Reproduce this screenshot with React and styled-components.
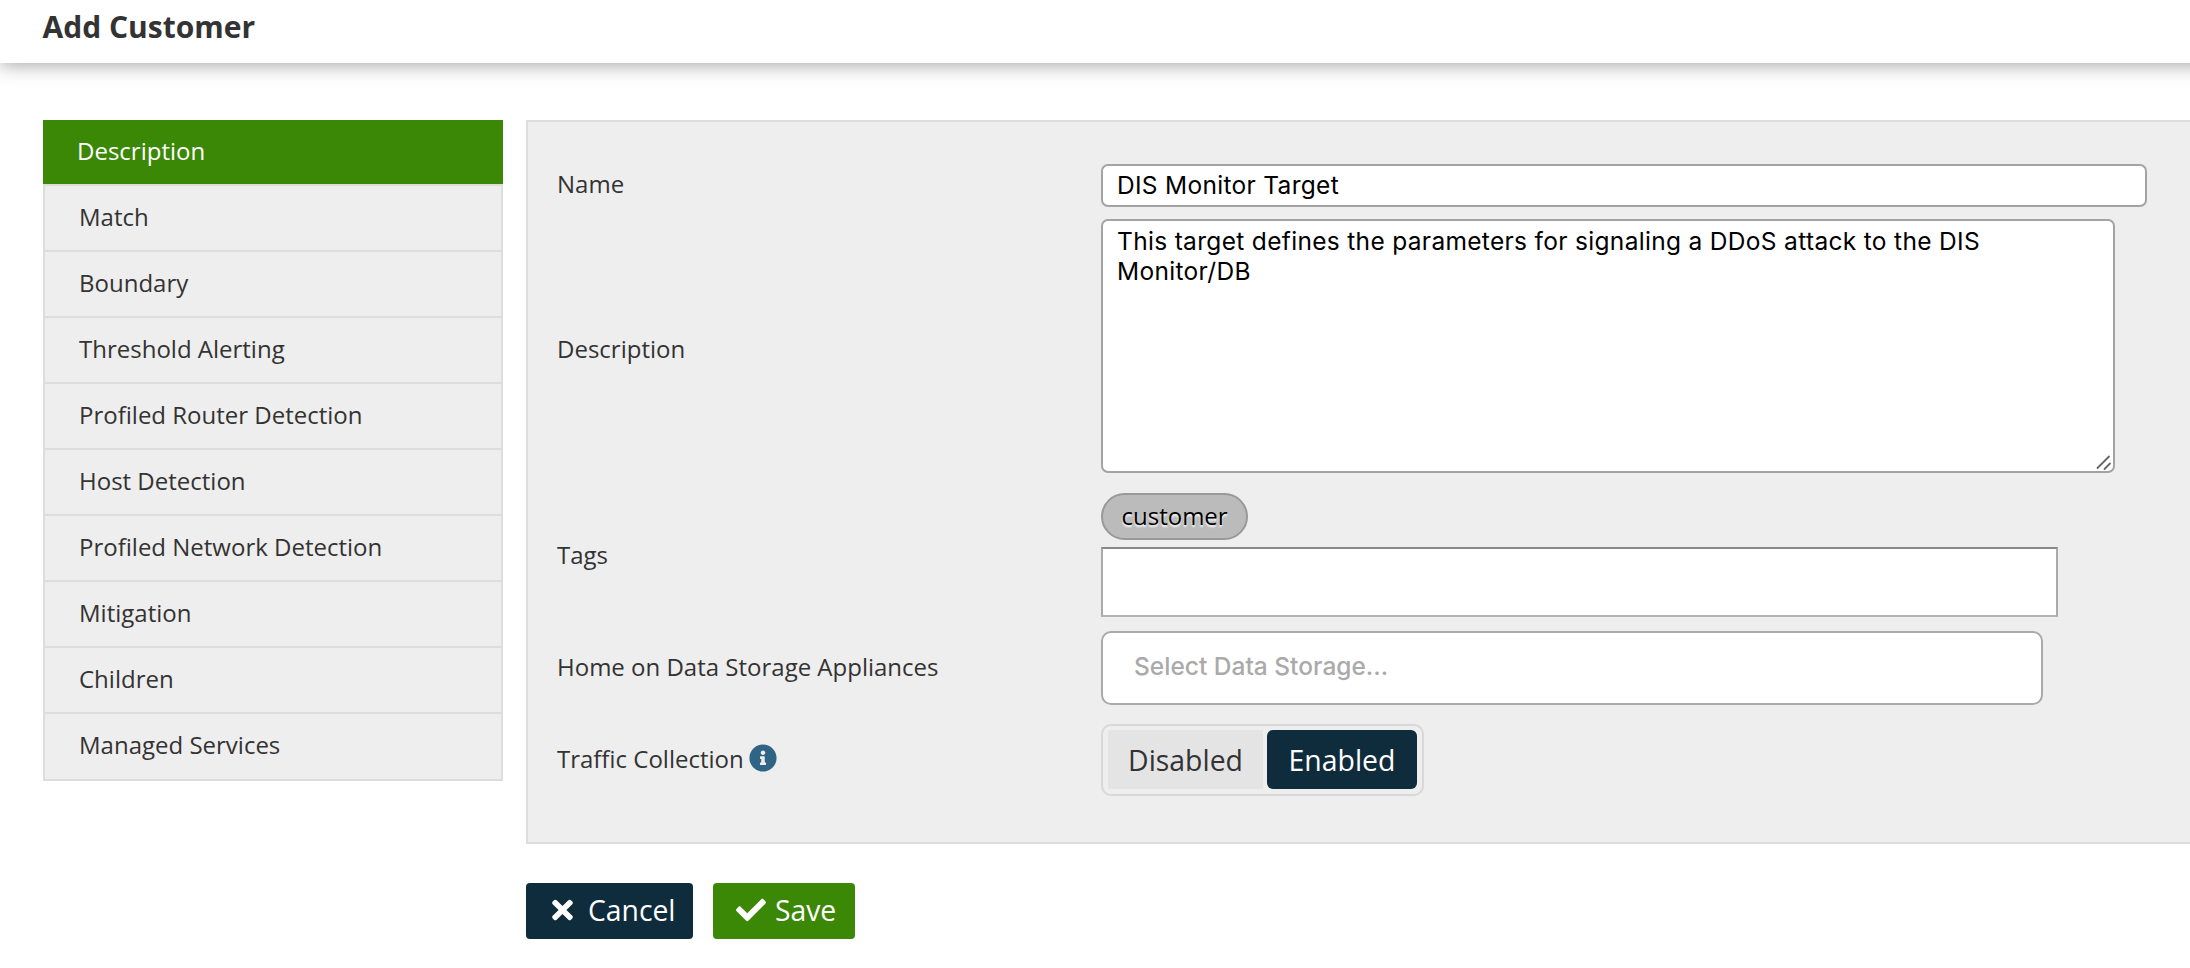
import React from "react";
import styled, { createGlobalStyle } from "styled-components";
import { FaCheck, FaInfoCircle, FaTimes } from "react-icons/fa";

const Global = createGlobalStyle`
  *, *::before, *::after { box-sizing: border-box; }
  body { margin: 0; background: #fff; color: #333; overflow: hidden; font: 24px/32px "Open Sans", sans-serif; }
`;

const Header = styled.header`
  height: 63px;
  margin-right: -24px;
  padding: 5px 42.5px 0;
  box-shadow: 0 2px 18px rgba(0, 0, 0, 0.36);
`;

const Title = styled.h1`
  margin: 0;
  font-size: 30px;
  line-height: 44px;
  font-weight: 700;
`;

const Layout = styled.main`
  display: flex;
  align-items: flex-start;
  gap: 23px;
  padding: 57px 0 0 43px;
`;

const Nav = styled.nav`
  flex: none;
  width: 460px;
`;

const NavItem = styled.a`
  display: flex;
  align-items: center;
  height: 66px;
  padding: 0 34px 2px;
  color: #333;
  background: #eee;
  border: 2px solid #ddd;
  border-bottom: 0;
  &:last-child { height: 69px; border-bottom: 2px solid #ddd; padding-bottom: 3px; }
  ${(p) => p.$active && `
    height: 64px;
    color: #fff;
    background: #3b8706;
    border-color: #3b8706;
    padding: 0 32px 4px;
  `}
`;

const Content = styled.section`
  flex: 1;
`;

const Panel = styled.div`
  display: flex;
  flex-direction: column;
  height: 724px;
  padding: 42px 0 0 29px;
  background: #eee;
  border: 2px solid #ddd;
  border-right: 0;
`;

const Row = styled.div`
  display: grid;
  grid-template-columns: 544px auto;
  justify-content: start;
  align-items: center;
  margin-bottom: ${(p) => p.$gap}px;
`;

const Label = styled.label`
  display: flex;
  align-items: center;
  gap: 5px;
  padding-top: ${(p) => p.$drop || 0}px;
  padding-bottom: ${(p) => p.$lift || 0}px;
`;

const InfoIcon = styled(FaInfoCircle)`
  width: 28px;
  height: 28px;
  margin-top: -3px;
  color: #2f6485;
`;

const TextInput = styled.input`
  width: 1046px;
  height: 43px;
  padding: 0 14px 2px;
  color: #000;
  background: #fff;
  border: 2px solid #a3a3a3;
  border-radius: 7px;
  outline: 0;
  font: 24.5px "Inter", sans-serif;
  letter-spacing: 0.3px;
`;

const AreaWrap = styled.div`
  position: relative;
  width: 1014px;
  height: 254px;
`;

const TextArea = styled.textarea`
  display: block;
  width: 100%;
  height: 100%;
  padding: 5px 14px;
  color: #000;
  background: #fff;
  border: 2px solid #a3a3a3;
  border-radius: 7px;
  outline: 0;
  resize: none;
  font: 24.5px/30px "Inter", sans-serif;
  letter-spacing: 0.32px;
`;

const Grip = styled.svg`
  position: absolute;
  right: 3px;
  bottom: 2px;
`;

const TagField = styled.div`
  display: flex;
  flex-direction: column;
  align-items: flex-start;
  gap: 7px;
`;

const Tag = styled.span`
  width: 147px;
  height: 47px;
  padding: 0 18.5px;
  line-height: 42px;
  color: #000;
  background: #bbb;
  border: 2px solid #999;
  border-radius: 24px;
  text-shadow: 0 2px 2px #fff;
`;

const TagInput = styled.input`
  width: 957px;
  height: 70px;
  background: #fff;
  border: 2px solid #aaa;
  border-top-color: #888;
  border-bottom-color: #b4b4b4;
  outline: 0;
`;

const StorageSelect = styled.div`
  width: 942px;
  height: 74px;
  padding: 0 31px 5px;
  display: flex;
  align-items: center;
  color: #aaa;
  background: #fff;
  border: 2px solid #aaa;
  border-radius: 10px;
  font: 450 24.5px "Inter", sans-serif;
`;

const Toggle = styled.div`
  display: flex;
  gap: 4px;
  height: 72px;
  padding: 4px 5px;
  border: 2px solid #d8d8d8;
  border-radius: 10px;
`;

const Option = styled.button`
  width: ${(p) => (p.$active ? 150 : 155)}px;
  height: 59px;
  padding: 0;
  border: 0;
  border-radius: ${(p) => (p.$active ? 6 : 0)}px;
  color: ${(p) => (p.$active ? "#fff" : "#333")};
  background: ${(p) => (p.$active ? "#0f2c3d" : "#e4e4e4")};
  font: ${(p) => (p.$active ? 500 : 400)} 28.4px "Open Sans", sans-serif;
`;

const Actions = styled.div`
  display: flex;
  gap: 20px;
  margin-top: 39px;
`;

const Button = styled.button`
  display: flex;
  align-items: center;
  gap: ${(p) => p.$gap}px;
  width: ${(p) => p.$width}px;
  height: 56px;
  padding: 0 0 2px ${(p) => p.$inset}px;
  border: 0;
  border-radius: 4px;
  color: #fff;
  background: ${(p) => (p.$primary ? "#3b8706" : "#0f2c3d")};
  font: 28.3px "Open Sans", sans-serif;
  svg { flex: none; height: 30px; width: ${(p) => (p.$primary ? 30 : 21)}px; margin-top: -1px; }
`;

const sections = [
  "Description", "Match", "Boundary", "Threshold Alerting", "Profiled Router Detection",
  "Host Detection", "Profiled Network Detection", "Mitigation", "Children", "Managed Services",
];

export default function App() {
  return (
    <>
      <Global />
      <Header><Title>Add Customer</Title></Header>
      <Layout>
        <Nav>
          {sections.map((s, i) => <NavItem key={s} $active={i === 0}>{s}</NavItem>)}
        </Nav>
        <Content>
          <Panel>
            <Row $gap={12}>
              <Label $lift={3}>Name</Label>
              <TextInput defaultValue="DIS Monitor Target" />
            </Row>
            <Row $gap={20}>
              <Label $drop={5}>Description</Label>
              <AreaWrap>
                <TextArea defaultValue="This target defines the parameters for signaling a DDoS attack to the DIS Monitor/DB" />
                <Grip width="16" height="16" viewBox="0 0 16 16" stroke="#666" strokeWidth="1.8" strokeLinecap="round">
                  <path d="M1.5 13 13 1.5M8.5 14 14 8.5" />
                </Grip>
              </AreaWrap>
            </Row>
            <Row $gap={14}>
              <Label>Tags</Label>
              <TagField>
                <Tag>customer</Tag>
                <TagInput />
              </TagField>
            </Row>
            <Row $gap={19}>
              <Label $lift={2}>Home on Data Storage Appliances</Label>
              <StorageSelect>Select Data Storage...</StorageSelect>
            </Row>
            <Row $gap={0}>
              <Label $lift={2}>Traffic Collection <InfoIcon /></Label>
              <Toggle>
                <Option>Disabled</Option>
                <Option $active>Enabled</Option>
              </Toggle>
            </Row>
          </Panel>
          <Actions>
            <Button $width={167} $inset={26} $gap={15}><FaTimes />Cancel</Button>
            <Button $primary $width={142} $inset={23} $gap={9}><FaCheck />Save</Button>
          </Actions>
        </Content>
      </Layout>
    </>
  );
}
